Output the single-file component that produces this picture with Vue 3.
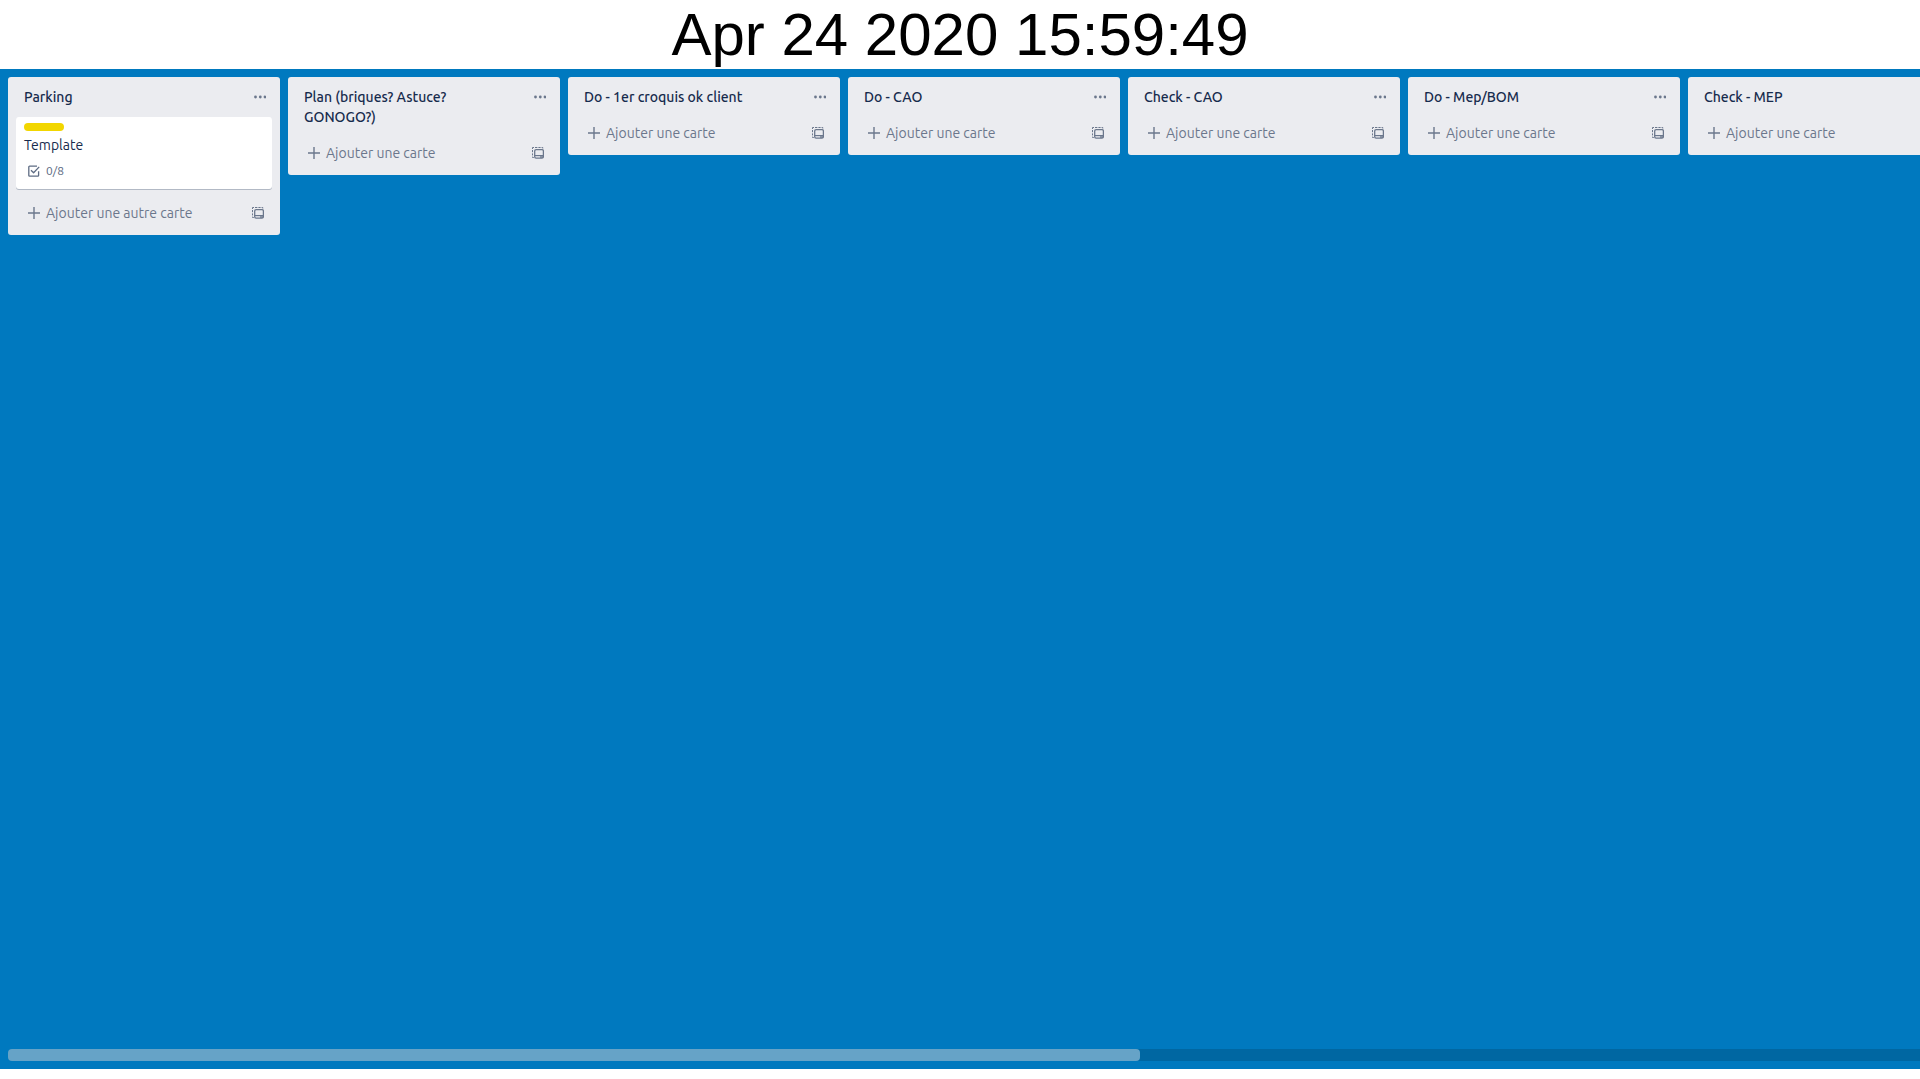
<script setup>
import { ref } from 'vue'

const timestamp = 'Apr 24 2020 15:59:49'

const lists = ref([
  { title: 'Parking', cards: [{ title: 'Template', checklist: '0/8' }] },
  { title: 'Plan (briques? Astuce? GONOGO?)', cards: [] },
  { title: 'Do - 1er croquis ok client', cards: [] },
  { title: 'Do - CAO', cards: [] },
  { title: 'Check - CAO', cards: [] },
  { title: 'Do - Mep/BOM', cards: [] },
  { title: 'Check - MEP', cards: [] },
])
</script>

<template>
  <div class="page">
    <header class="clock">
      <time datetime="2020-04-24T15:59:49">{{ timestamp }}</time>
    </header>

    <main class="board">
      <div class="lists">
        <section v-for="list in lists" :key="list.title" class="list">
          <div class="list-header">
            <h2 class="list-title">{{ list.title }}</h2>
            <button class="icon-button" type="button" aria-label="Menu de la liste">
              <svg width="12" height="12" viewBox="0 0 12 12" fill="currentColor">
                <circle cx="1.5" cy="6" r="1.4" />
                <circle cx="6.3" cy="6" r="1.4" />
                <circle cx="11" cy="6" r="1.4" />
              </svg>
            </button>
          </div>

          <article v-for="card in list.cards" :key="card.title" class="card">
            <span class="label"></span>
            <a class="card-title" href="#">{{ card.title }}</a>
            <div class="badge">
              <svg width="12" height="12" viewBox="0 0 12 12" fill="none" stroke="currentColor" stroke-width="1.3" stroke-linejoin="round">
                <path d="M9 1.2H1.6a.8.8 0 0 0-.8.8v8.4c0 .5.3.8.8.8h8.2c.5 0 .8-.3.8-.8V6.3" />
                <path d="M3 5.2l2.6 2.6 5.6-5.9" />
              </svg>
              <span>{{ card.checklist }}</span>
            </div>
          </article>

          <div class="list-footer">
            <button class="add-card" type="button">
              <svg width="12" height="12" viewBox="0 0 12 12" stroke="currentColor" stroke-width="1.4">
                <path d="M6 0v12M0 6h12" />
              </svg>
              <span>{{ list.cards.length ? 'Ajouter une autre carte' : 'Ajouter une carte' }}</span>
            </button>
            <button class="icon-button" type="button" aria-label="Créer à partir d'un modèle">
              <svg width="12" height="12" viewBox="0 0 12 12" fill="none" stroke="currentColor">
                <path d="M.5 2V.5H2M3 .5h2.4M6.4.5h2.2M9.6.5h1.2v1M.5 3v2.2M.5 6.4v2M.5 9.6v.9h1.3" />
                <rect x="2.7" y="2.7" width="8.7" height="8.4" rx="1.4" stroke-width="1.3" />
                <path d="M2.7 8.6h8.7" stroke-width="1.2" />
                <path d="M8 10h3" stroke-width="1.4" />
              </svg>
            </button>
          </div>
        </section>
      </div>

      <div class="scroll-track">
        <div class="scroll-thumb"></div>
      </div>
    </main>
  </div>
</template>

<style>
html,
body {
  margin: 0;
  background: #fff;
}
</style>

<style scoped>
.page {
  display: flex;
  flex-direction: column;
  box-sizing: border-box;
  height: 100vh;
  padding-bottom: 10px;
  overflow: hidden;
  font-family: Ubuntu, "Noto Sans", sans-serif;
  font-size: 14px;
  line-height: 20px;
  color: #172b4d;
}

.clock {
  flex: none;
  font-family: Arial, "Liberation Sans", sans-serif;
  font-size: 60px;
  line-height: 69px;
  text-align: center;
  color: #000;
}

.board {
  flex: 1;
  display: flex;
  flex-direction: column;
  justify-content: space-between;
  padding: 8px 0 8px 8px;
  background: #0079bf;
  overflow: hidden;
}

.lists {
  display: flex;
  align-items: flex-start;
  gap: 8px;
}

.list {
  flex: none;
  width: 272px;
  border-radius: 3px;
  background: #ebecf0;
}

.list-header {
  display: flex;
  align-items: flex-start;
  justify-content: space-between;
  padding: 10px 6px 10px 16px;
}

.list-title {
  margin: 0;
  max-width: 208px;
  font-size: 14px;
  line-height: 20px;
  font-weight: 550;
}

button {
  border: 0;
  padding: 0;
  background: none;
  font: inherit;
  color: #6b778c;
  cursor: pointer;
}

svg {
  flex: none;
  display: block;
}

.icon-button {
  display: flex;
  align-items: center;
  justify-content: center;
  width: 28px;
  height: 20px;
}

.card {
  display: flex;
  flex-direction: column;
  align-items: flex-start;
  margin: 0 8px 8px;
  padding: 6px 8px 8px;
  border-radius: 3px;
  background: #fff;
  box-shadow: 0 1px 0 rgba(9, 30, 66, 0.25);
}

.label {
  width: 40px;
  height: 8px;
  margin-bottom: 4px;
  border-radius: 4px;
  background: #f2d600;
}

.card-title {
  margin-bottom: 6px;
  color: #172b4d;
  text-decoration: none;
}

.badge {
  display: flex;
  align-items: center;
  gap: 6px;
  padding-left: 4px;
  font-size: 12px;
  color: #5e6c84;
}

.list-footer {
  display: flex;
  align-items: center;
  justify-content: space-between;
  padding: 2px 8px 8px;
}

.add-card {
  display: flex;
  align-items: center;
  gap: 6px;
  height: 28px;
  padding-left: 12px;
}

.scroll-track {
  height: 12px;
  border-radius: 4px 0 0 4px;
  background: rgba(0, 0, 0, 0.15);
}

.scroll-thumb {
  width: 59.2%;
  height: 12px;
  border-radius: 4px;
  background: rgba(255, 255, 255, 0.4);
}
</style>
